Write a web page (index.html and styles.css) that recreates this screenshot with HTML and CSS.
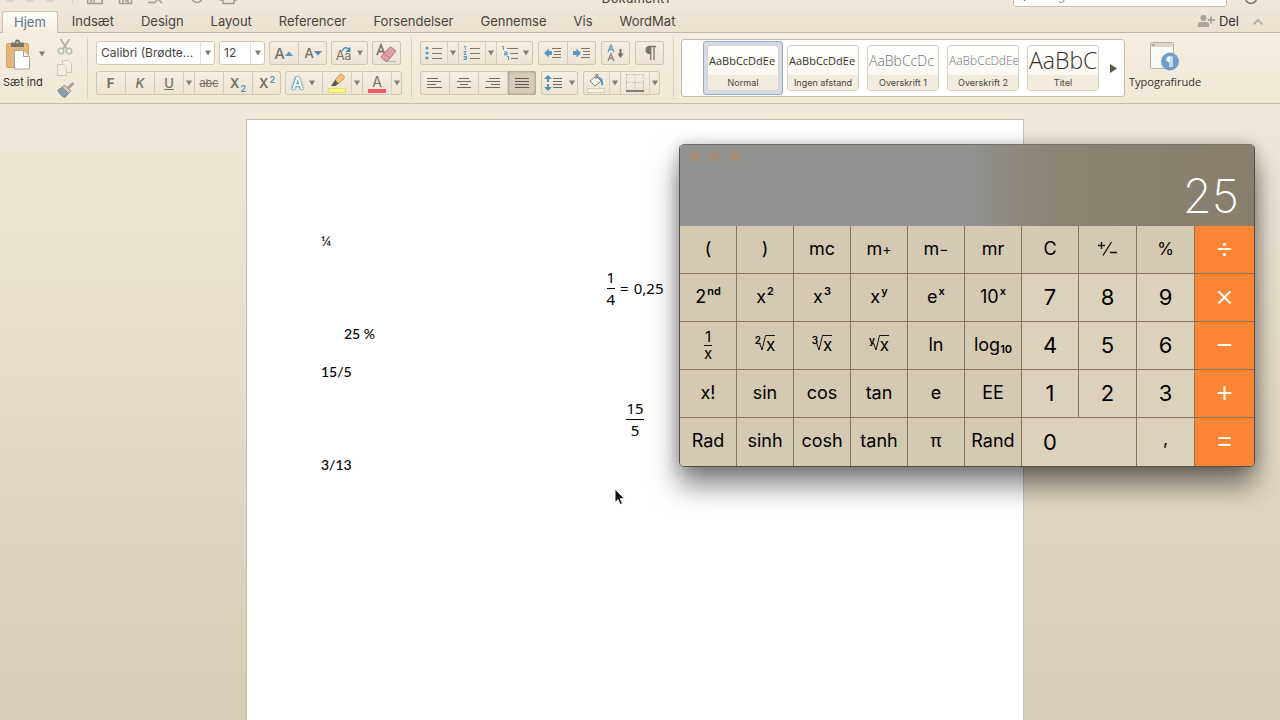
FILE: index.html
```html
<!DOCTYPE html>
<html lang="da">
<head>
<meta charset="utf-8">
<title>Dokument1</title>
<link rel="stylesheet" href="styles.css">
</head>
<body>
<svg class="defs" aria-hidden="true">
  <symbol id="caret" viewBox="0 0 6 6"><path d="M0 .5h6L3 5.500z" fill="#857d70"/></symbol>
</svg>

<header class="titlebar">
  <div class="title-left">
    <span class="light"></span><span class="light"></span><span class="light"></span>
    <span class="title-sep"></span>
    <svg class="qa" width="150" height="16" viewBox="0 0 150 16" fill="none" stroke="#a39c8f" stroke-width="1.500"><path d="M.7 2v12.500h14.600V2M4 14V8h3v6M32.500 2v12.500h12V2M36 14V9h5v5M39 9v4M61 13.500h7l4-5M71 10l4 4M136 9v5.500h11V9M133 6v5h3M147 11h3V6"/><circle cx="110" cy="8.500" r="5"/></svg>
  </div>
  <div class="doc-title">Dokument1</div>
  <div class="title-right">
    <label class="search">
      <svg width="12" height="12" viewBox="0 0 12 12" fill="none" stroke="#4f4a43" stroke-width="1.500"><circle cx="7" cy="5" r="4"/><path d="M4 8l-3 3.500"/></svg>
      <input type="search" aria-label="Søg" placeholder="Søg i dokument">
    </label>
    <svg width="14" height="14" viewBox="0 0 14 14" fill="none" stroke="#7d766a" stroke-width="1.500"><circle cx="7" cy="7" r="5.500"/></svg>
  </div>
</header>

<nav class="tabs">
  <button class="tab active">Hjem</button>
  <button class="tab">Indsæt</button>
  <button class="tab">Design</button>
  <button class="tab">Layout</button>
  <button class="tab">Referencer</button>
  <button class="tab">Forsendelser</button>
  <button class="tab">Gennemse</button>
  <button class="tab">Vis</button>
  <button class="tab">WordMat</button>
  <button class="share">
    <svg width="18" height="14" viewBox="0 0 18 14" fill="#aaa398"><circle cx="5.500" cy="4" r="3"/><path d="M0 13v-2.500Q0 8 3 8h5q3 0 3 2.500V13z"/><path d="M13 2.500v7M9.800 6h7" stroke="#aaa398" stroke-width="1.800"/></svg>
    Del
  </button>
  <button class="collapse" aria-label="Skjul bånd"><svg width="12" height="8" viewBox="0 0 12 8"><path d="M1.500 6.500L6 2l4.500 4.500" fill="none" stroke="#b9b4aa" stroke-width="2"/></svg></button>
</nav>

<section class="ribbon">
  <div class="group clip">
    <div class="paste">
      <button class="paste-btn" aria-label="Sæt ind">
        <svg width="26" height="31" viewBox="0 0 26 31"><rect x=".5" y="4.500" width="22" height="24" rx="1.500" fill="#e5b67d" stroke="#cf9f68"/><path d="M5 8V4.500q0-1 1-1h3Q9 .5 11.500.5T14 3.500h3q1 0 1 1V8z" fill="#77746d"/><circle cx="11.500" cy="3.500" r="1" fill="#d9d3c4"/><path d="M8.500 11.500h9l6 6V30h-15z" fill="#fff" stroke="#aaa496"/><path d="M17.500 11.500v6h6" fill="#eee" stroke="#aaa496"/></svg>
        <svg class="caret" width="6" height="6"><use href="#caret"/></svg>
      </button>
      <span class="paste-label">Sæt ind</span>
    </div>
    <div class="clip-tools">
      <button aria-label="Klip"><svg width="16" height="17" viewBox="0 0 16 17" fill="none" stroke="#b3ada1" stroke-width="1.600"><path d="M3.500 1l6.500 10M12.500 1L6 11"/><circle cx="4" cy="13" r="2.800" stroke="#b4bec3"/><circle cx="12" cy="13" r="2.800" stroke="#b4bec3"/></svg></button>
      <button aria-label="Kopiér"><svg width="16" height="17" viewBox="0 0 16 17" fill="#f5efe0" stroke="#d0c8b8"><path d="M5.500.5h6l3 3v9h-9z"/><path d="M.5 4.500h6l3 3v8h-9z"/></svg></button>
      <button aria-label="Formatpensel"><svg width="18" height="17" viewBox="0 0 18 17"><path d="M15.500 2L11 6" stroke="#a8a196" stroke-width="3" stroke-linecap="round"/><path d="M7.500 3l6.500 6-2.500 2.500L5 5.500z" fill="#d2cabb" stroke="#989184"/><path d="M5 5.500l6.500 6L8 15.500Q3 14 1 8z" fill="#86a0b2" stroke="#8a8880"/></svg></button>
    </div>
  </div>

  <div class="group">
    <div class="row">
      <label class="combo font-name"><select aria-label="Skrifttype"><option>Calibri (Brødte...</option></select><span class="drop"><svg class="caret" width="6" height="6"><use href="#caret"/></svg></span></label>
      <label class="combo font-size"><select aria-label="Skriftstørrelse"><option>12</option></select><span class="drop"><svg class="caret" width="6" height="6"><use href="#caret"/></svg></span></label>
      <div class="set">
        <button class="cell" aria-label="Større skrift"><span class="grow">A</span><svg width="8" height="5" viewBox="0 0 8 5"><path d="M0 5l4-4.500L8 5z" fill="#5b93c0"/></svg></button>
        <button class="cell" aria-label="Mindre skrift"><span class="shrink">A</span><svg width="8" height="5" viewBox="0 0 8 5"><path d="M0 0l4 4.500L8 0z" fill="#5b86ae"/></svg></button>
      </div>
      <div class="set"><button class="cell medium case" aria-label="Store og små bogstaver"><span class="aa">A<small>a</small></span><svg class="case-arrow" width="11" height="6" viewBox="0 0 11 6"><path d="M1 5Q3 0 8 3" fill="none" stroke="#4f90c0" stroke-width="1.500"/><path d="M9.500.5V6H4.500z" fill="#4f90c0"/></svg><svg class="caret" width="6" height="6"><use href="#caret"/></svg></button></div>
      <div class="set"><button class="cell" aria-label="Ryd formatering"><svg width="22" height="20" viewBox="0 0 22 20"><path d="M1 12L5 2l4 10M2.500 8.500h5" fill="none" stroke="#807a6f" stroke-width="1.800"/><path d="M10 18.500h10" stroke="#b9b2a3"/><path d="M5.500 13L13.500 4.500q1-1 2 0l3.500 2.500q1 1 0 2.200L11.500 18q-1 .9-2 0l-4-3q-1-1 0-2z" fill="#e0a0a4" stroke="#b4797e"/><path d="M8 10.500l6 5" stroke="#b4797e"/></svg></button></div>
    </div>
    <div class="row">
      <div class="set">
        <button class="cell"><b>F</b></button>
        <button class="cell"><i>K</i></button>
        <button class="cell"><u>U</u></button><button class="cell arrow" aria-label="Understregningstype"><svg class="caret" width="6" height="6"><use href="#caret"/></svg></button>
        <button class="cell"><s>abc</s></button>
        <button class="cell"><span class="script">X<sub>2</sub></span></button>
        <button class="cell"><span class="script">X<sup>2</sup></span></button>
      </div>
      <div class="set">
        <button class="cell medium effect"><span class="glow">A</span><svg class="caret" width="6" height="6"><use href="#caret"/></svg></button>
        <button class="cell" aria-label="Fremhævningsfarve"><svg width="20" height="20" viewBox="0 0 20 20"><rect x="1.500" y="15.500" width="17" height="4" fill="#f8f87a" stroke="#e3df78"/><path d="M8 7l5-5.500q1-1 2 0l2 2q1 1 0 2L11 11z" fill="#efc07e" stroke="#c79456"/><path d="M8 7l3.500 3.500L8.500 13H4z" fill="#5d5a54"/></svg></button><button class="cell arrow" aria-label="Vælg fremhævning"><svg class="caret" width="6" height="6"><use href="#caret"/></svg></button>
        <button class="cell color" aria-label="Skriftfarve"><span>A</span></button><button class="cell arrow" aria-label="Vælg skriftfarve"><svg class="caret" width="6" height="6"><use href="#caret"/></svg></button>
      </div>
    </div>
  </div>

  <div class="group para">
    <div class="row">
      <div class="set">
        <button class="cell list" aria-label="Punkttegn"><svg width="18" height="14" viewBox="0 0 18 14"><g fill="#5b97c5"><circle cx="2" cy="2" r="1.600"/><circle cx="2" cy="7" r="1.600"/><circle cx="2" cy="12" r="1.600"/></g><path d="M7 2.500h10M7 7.500h10M7 12.500h10" stroke="#7d766b"/></svg></button><button class="cell arrow" aria-label="Vælg punkttegn"><svg class="caret" width="6" height="6"><use href="#caret"/></svg></button>
        <button class="cell list" aria-label="Nummerering"><svg width="18" height="16" viewBox="0 0 18 16"><g fill="none" stroke="#5b97c5"><path d="M1 1.500h1.500V4.500M.5 6.500h2.500L1 9.500h2.500M.5 11.500h3v3h-3M1 13h2"/></g><path d="M7 3.500h10M7 8.500h10M7 13.500h10" stroke="#7d766b"/></svg></button><button class="cell arrow" aria-label="Vælg nummerering"><svg class="caret" width="6" height="6"><use href="#caret"/></svg></button>
        <button class="cell medium multi" aria-label="Liste på flere niveauer"><svg width="18" height="16" viewBox="0 0 18 16"><path d="M1 1.500h1.500V5M3 7h3v3H3.500V8.500H6M6 11.500h1.500v3.500" fill="none" stroke="#5b97c5"/><path d="M6 3.500h11M9 8.500h8M10 13.500h7" stroke="#7d766b"/></svg><svg class="caret" width="6" height="6"><use href="#caret"/></svg></button>
      </div>
      <div class="set">
        <button class="cell" aria-label="Formindsk indrykning"><svg width="18" height="12" viewBox="0 0 18 12"><path d="M0 6l5-4.500V4h3v4H5v2.500z" fill="#5b97c5"/><path d="M8 1.500h9M10 4.500h7M10 7.500h7M8 10.500h9" stroke="#7d766b"/></svg></button>
        <button class="cell" aria-label="Forøg indrykning"><svg width="18" height="12" viewBox="0 0 18 12"><path d="M8 6L3.500 1.500V4H0v4h3.500v2.500z" fill="#5b97c5"/><path d="M8 1.500h9M10 4.500h7M10 7.500h7M8 10.500h9" stroke="#7d766b"/></svg></button>
      </div>
      <div class="set"><button class="cell" aria-label="Sortér"><svg width="18" height="18" viewBox="0 0 18 18" fill="none" stroke-width="1.300"><path d="M1 8l3-7 3 7M2.500 5.500h3" stroke="#6599c0"/><path d="M1 17l3-7 3 7M2.500 14.500h3" stroke="#8d8679"/><path d="M13.500 5v7" stroke="#777065" stroke-width="2"/><path d="M10.500 9.500h6L13.500 14z" fill="#777065"/></svg></button></div>
      <div class="set"><button class="cell" aria-label="Vis alle tegn"><svg width="12" height="16" viewBox="0 0 12 16"><path d="M7 1H5.500a4 4 0 000 8H7z" fill="#7d766b"/><path d="M4 1.500h8M6.700 1v14M10 1v14" stroke="#7d766b" stroke-width="1.300"/></svg></button></div>
    </div>
    <div class="row">
      <div class="set">
        <button class="cell" aria-label="Venstrestil"><svg width="16" height="12" viewBox="0 0 16 12" stroke="#716a60"><path d="M0 1.500h11M0 4.500h14M0 7.500h9M0 10.500h15"/></svg></button>
        <button class="cell" aria-label="Centrér"><svg width="16" height="12" viewBox="0 0 16 12" stroke="#716a60"><path d="M3 1.500h10M1 4.500h14M4 7.500h8M1 10.500h14"/></svg></button>
        <button class="cell" aria-label="Højrestil"><svg width="16" height="12" viewBox="0 0 16 12" stroke="#716a60"><path d="M4 1.500h11M1 4.500h14M6 7.500h9M0 10.500h15"/></svg></button>
        <button class="cell pressed" aria-label="Lige margener"><svg width="16" height="12" viewBox="0 0 16 12" stroke="#615a50"><path d="M1 1.500h14M1 4.500h14M1 7.500h14M1 10.500h14"/></svg></button>
      </div>
      <div class="set"><button class="cell medium" aria-label="Linjeafstand"><svg width="19" height="16" viewBox="0 0 19 16"><path d="M4 0l4 4H5v3H3V4H0zM4 16l4-4H5V9H3v3H0z" fill="#4f90c0"/><path d="M9 3.500h9M9 6.500h9M9 9.500h9M9 12.500h9" stroke="#716a60"/></svg><svg class="caret" width="6" height="6"><use href="#caret"/></svg></button></div>
      <div class="set">
        <button class="cell tight" aria-label="Skygge"><svg width="18" height="20" viewBox="0 0 18 20"><rect x=".5" y="15.500" width="17" height="4" fill="#f5efe0" stroke="#d3cbbb"/><path d="M3 8l6-5 5 5-6 5z" fill="#f7f3ea" stroke="#7f8587"/><path d="M9 6V1.500h2V5" fill="none" stroke="#77736a"/><path d="M11 5q5 0 4 7" fill="none" stroke="#5b97c5" stroke-width="2"/></svg></button><button class="cell arrow" aria-label="Vælg skygge"><svg class="caret" width="6" height="6"><use href="#caret"/></svg></button>
        <button class="cell" aria-label="Kanter"><svg width="18" height="18" viewBox="0 0 18 18"><path d="M.5.500h17M.5 8.500h17M.5.500v16M9 .500v16M17.500.500v16" stroke="#a49d90" stroke-dasharray="1 2"/><path d="M0 17h18" stroke="#625c52" stroke-width="1.500"/></svg></button><button class="cell arrow" aria-label="Vælg kanter"><svg class="caret" width="6" height="6"><use href="#caret"/></svg></button>
      </div>
    </div>
  </div>

  <div class="group styles">
    <div class="gallery">
      <button class="style selected"><span class="card"><span class="sample">AaBbCcDdEe</span><span class="name">Normal</span></span></button>
      <button class="style"><span class="card"><span class="sample">AaBbCcDdEe</span><span class="name">Ingen afstand</span></span></button>
      <button class="style"><span class="card"><span class="sample h1">AaBbCcDc</span><span class="name">Overskrift 1</span></span></button>
      <button class="style"><span class="card"><span class="sample h2">AaBbCcDdEe</span><span class="name">Overskrift 2</span></span></button>
      <button class="style"><span class="card"><span class="sample title">AaBbC</span><span class="name">Titel</span></span></button>
      <button class="more" aria-label="Flere typografier"><svg width="7" height="9" viewBox="0 0 7 9"><path d="M0 0l7 4.500L0 9z" fill="#5d574e"/></svg></button>
    </div>
    <button class="pane">
      <svg width="30" height="31" viewBox="0 0 30 31"><rect x=".5" y="1.500" width="23" height="26" rx="1" fill="#fbf9f4" stroke="#b9b1a3"/><path d="M1 2h22v4H1z" fill="#ded4c3"/><circle cx="3.500" cy="4" r="1" fill="#8b8478"/><circle cx="20" cy="20.500" r="9" fill="#6c9fca"/><path d="M20 15.500h-1a2.500 2.500 0 000 5.500h1z" fill="#fff"/><path d="M18.500 16h4M20 16v10M22 16v10" stroke="#fff" stroke-width="1.200"/></svg>
      <span>Typografirude</span>
    </button>
  </div>
</section>

<main class="workspace">
  <article class="page">
    <p>¼</p>
    <div class="formula"><span class="frac"><span>1</span><span>4</span></span><span class="eq">=</span><span>0,25</span></div>
    <p class="indent">25 %</p>
    <p>15/5</p>
    <div class="formula"><span class="frac"><span>15</span><span>5</span></span></div>
    <p>3/13</p>
  </article>
</main>

<section class="calc" aria-label="Lommeregner">
  <div class="display">
    <div class="dots"><span></span><span></span><span></span></div>
    <output>25</output>
  </div>
  <div class="keys">
    <button>(</button><button>)</button><button>mc</button><button>m<small>+</small></button><button>m<small>−</small></button><button>mr</button><button>C</button>
    <button><svg width="20" height="16" viewBox="0 0 20 16" role="img" aria-label="plus minus" fill="none" stroke="#111" stroke-width="1.300"><path d="M0 4.500h7M3.500 1v7M13.500 1L5 14.500M12 11.500h7"/></svg></button>
    <button class="pct">%</button><button class="op">÷</button>

    <button>2<sup>nd</sup></button><button>x<sup>2</sup></button><button>x<sup>3</sup></button><button>x<sup>y</sup></button><button>e<sup>x</sup></button><button>10<sup>x</sup></button><button class="num">7</button><button class="num">8</button><button class="num">9</button><button class="op">×</button>

    <button><span class="inverse"><span>1</span><span>x</span></span></button>
    <button><span class="root"><span class="index">2</span><svg width="8" height="16" viewBox="0 0 8 16"><path d="M0 9l1.500-1L4 15 7.500.500H8" fill="none" stroke="#111"/></svg><span class="rad">x</span></span></button>
    <button><span class="root"><span class="index">3</span><svg width="8" height="16" viewBox="0 0 8 16"><path d="M0 9l1.500-1L4 15 7.500.500H8" fill="none" stroke="#111"/></svg><span class="rad">x</span></span></button>
    <button><span class="root"><span class="index">y</span><svg width="8" height="16" viewBox="0 0 8 16"><path d="M0 9l1.500-1L4 15 7.500.500H8" fill="none" stroke="#111"/></svg><span class="rad">x</span></span></button>
    <button>ln</button><button>log<sub>10</sub></button><button class="num">4</button><button class="num">5</button><button class="num">6</button><button class="op">−</button>

    <button>x!</button><button>sin</button><button>cos</button><button>tan</button><button>e</button><button>EE</button><button class="num">1</button><button class="num">2</button><button class="num">3</button><button class="op">+</button>

    <button>Rad</button><button>sinh</button><button>cosh</button><button>tanh</button><button>π</button><button>Rand</button><button class="num zero">0</button><button class="num comma">,</button><button class="op">=</button>
  </div>
</section>

<svg class="pointer" width="12" height="18" viewBox="0 0 12 18"><path d="M1 1v13.500l3-2.800 2.200 4.800 2.300-1-2.200-4.700H10.500z" fill="#111" stroke="#fff"/></svg>
</body>
</html>
```
FILE: styles.css
```css
* { box-sizing: border-box; }
html, body { height: 100%; }
body {
  margin: 0;
  display: flex;
  flex-direction: column;
  overflow: hidden;
  position: relative;
  font-family: Inter, "Liberation Sans", sans-serif;
  color: #48433d;
  background: #ebe2cf;
}
button {
  font: inherit;
  color: inherit;
  background: none;
  border: 0;
  padding: 0;
  margin: 0;
}
svg { display: block; flex: none; }
.defs { position: absolute; width: 0; height: 0; }

/* Title bar */
.titlebar {
  height: 11px;
  flex: none;
  display: grid;
  grid-template-columns: 1fr auto 1fr;
  align-items: end;
  overflow: hidden;
  padding: 0 22px 5px 4px;
  background: #efe8d8;
}
.title-left, .title-right { display: flex; align-items: flex-end; height: 6px; }
.title-left { gap: 8px; padding-bottom: 4px; }
.title-right { justify-content: flex-end; gap: 17px; }
.title-right > svg { margin-bottom: 2px; }
.light { width: 12px; height: 12px; border-radius: 6px; background: #d8d0c1; margin-bottom: 1px; }
.title-sep { width: 1px; height: 12px; background: #d5ccba; margin: 0 6px 0 8px; }
.qa { margin-bottom: -2px; }
.doc-title { font-size: 13px; line-height: 16px; height: 7px; display: flex; align-items: flex-end; padding: 0 0 1px 9px; }
.search {
  display: flex;
  align-items: center;
  gap: 6px;
  width: 214px;
  height: 22px;
  border: 1px solid #c8c0b2;
  border-radius: 3px;
  background: #fff;
  padding: 0 9px 2px;
}
.search input {
  flex: 1;
  min-width: 0;
  border: 0;
  padding: 0;
  background: none;
  font: 13px Inter, sans-serif;
}
.search input::placeholder { color: #a39c92; opacity: 1; }

/* Tabs */
.tabs {
  height: 22px;
  flex: none;
  display: flex;
  align-items: stretch;
  gap: 1px;
  padding: 0 16px 0 2px;
  border-bottom: 1px solid #c2b9a6;
  background: linear-gradient(#eee6d6, #eae1d0);
}
.tab { padding: 0 13px 1px; font-size: 13px; line-height: 18px; }
.tab.active {
  padding: 0 11px 2px;
  height: 22px;
  border: 1px solid #c9c0ad;
  border-width: 1px 1px 0;
  border-radius: 3px 3px 0 0;
  background: linear-gradient(#fffefa, #f5eedd);
  color: #5d7392;
}
.share { margin-left: auto; display: flex; align-items: center; gap: 3px; padding-bottom: 2px; font-size: 13px; line-height: 18px; color: #36313a; }
.collapse { margin-left: 12px; }

/* Ribbon */
.ribbon {
  height: 71px;
  flex: none;
  display: flex;
  border-bottom: 1px solid #c7bda9;
  background: linear-gradient(#f5efdf, #f0e8d7);
}
.group {
  display: flex;
  flex-direction: column;
  gap: 6px;
  padding: 8px 10px 0 8px;
  position: relative;
}
.group:not(.styles)::after {
  content: "";
  position: absolute;
  right: 0;
  top: 4px;
  bottom: 4px;
  width: 1px;
  background: #d9d0be;
}
.group.clip { flex-direction: row; gap: 12px; width: 88px; padding: 5px 0 0 3px; }
.paste { width: 42px; white-space: nowrap; }
.paste-btn { display: flex; align-items: center; gap: 7px; padding-left: 3px; height: 32px; }
.paste-label { display: block; font-size: 11px; line-height: 20px; margin-top: 2px; color: #332e28; }
.clip-tools { display: flex; flex-direction: column; gap: 5px; }
.row { display: flex; gap: 4px; height: 24px; }
.para .row { gap: 5px; }
.set {
  display: flex;
  border-radius: 3px;
  box-shadow: inset 0 0 0 1px #cfc6b4;
  background: linear-gradient(#f6f0e2, #ece3d2);
}
.cell {
  width: 29px;
  height: 24px;
  display: flex;
  align-items: center;
  justify-content: center;
  font-size: 14px;
  color: #777065;
}
.cell + .cell { border-left: 1px solid #d3cab8; }
.cell.arrow { width: 11px; border-left-color: #d9d0be; }
.cell.medium { width: 37px; gap: 6px; }
.cell.list { width: 27px; }
.cell.tight { width: 26px; }
.cell.multi { gap: 4px; }
.cell.pressed { background: #d6ccb9; border-radius: 0 3px 3px 0; box-shadow: inset 0 0 3px #7d7466; }
.combo {
  display: flex;
  border: 1px solid #cfc6b4;
  border-radius: 3px;
  background: #fff;
}
.combo select {
  flex: 1;
  min-width: 0;
  appearance: none;
  border: 0;
  background: none;
  padding: 0 4px 1px;
  font: 12px Inter, sans-serif;
  color: #48433d;
}
.font-name { width: 119px; }
.font-size { width: 46px; }
.drop { width: 14px; border-left: 1px solid #e3ddd2; display: flex; align-items: center; justify-content: center; }
.grow { font-size: 15px; font-weight: 500; }
.shrink { font-size: 13px; font-weight: 500; }
.case { position: relative; }
.case-arrow { position: absolute; left: 10px; top: 5px; }
.aa { padding-top: 3px; font-size: 13px; }
.aa small { font-size: 12px; }
.cell b { font-size: 13px; font-weight: 700; }
.cell i, .cell u { font-size: 13px; font-weight: 500; }
.cell s { font-size: 11px; }
.script { font-size: 13px; font-weight: 600; line-height: 16px; }
.script sub, .script sup { font-size: 9px; line-height: 0; color: #5b8fb8; margin-left: 1px; }
.glow { font-size: 16px; font-weight: 600; color: #fff; text-shadow: 0 0 1px #3f87b5, 0 0 1px #3f87b5, 0 0 2px #3f87b5, 0 0 2px #3f87b5; }
.color span { line-height: 14px; padding: 0 4px; border-bottom: 4px solid #f15b66; margin-top: 2px; }

/* Style gallery */
.group.styles { flex-direction: row; gap: 4px; padding: 6px 0 0 7px; }
.gallery {
  display: flex;
  align-items: center;
  height: 58px;
  padding: 0 0 0 21px;
  border: 1px solid #c3bbaa;
  border-radius: 3px;
  background: #fff;
}
.style { width: 80px; height: 54px; padding: 4px; border-radius: 3px; }
.style.selected { background: #d3dbe9; border: 1px solid #9aa8bd; padding: 3px; }
.card {
  display: flex;
  flex-direction: column;
  height: 46px;
  border: 1px solid #d8d2c5;
  border-radius: 3px;
  overflow: hidden;
  background: linear-gradient(#fff, #f8f4e9);
}
.sample {
  height: 29px;
  display: flex;
  align-items: center;
  padding: 0 1px;
  font: 11px/29px "Open Sans", sans-serif;
  color: #38332d;
  white-space: nowrap;
  overflow: hidden;
}
.sample.h1 { font-size: 14px; font-weight: 300; color: #6f7480; }
.sample.h2 { font-size: 12px; font-weight: 300; color: #6f7480; }
.sample.title { font-size: 23px; font-weight: 300; }
.name { flex: 1; background: #f2ecdf; font-size: 9px; line-height: 15px; text-align: center; }
.more { width: 21px; display: flex; justify-content: center; }
.pane { display: flex; flex-direction: column; align-items: center; padding-top: 2px; height: 56px; font: 11px/20px "Open Sans", sans-serif; color: #332e28; }

/* Document */
.workspace {
  flex: 1;
  min-height: 0;
  display: flex;
  justify-content: center;
  padding: 15px 10px 0 0;
  background: linear-gradient(#f0e9d9, #d7ccb5);
}
.page {
  width: 778px;
  max-width: 100%;
  padding: 111px 74px 0;
  border: 1px solid #c9c0ac;
  border-bottom: 0;
  background: #fff;
  color: #000;
  font: 500 14px/19px Lato, sans-serif;
}
.page p { margin: 0; }
.page .indent { padding-left: 23px; margin-bottom: 19px; }
.formula {
  display: flex;
  align-items: center;
  justify-content: center;
  gap: 5px;
  height: 36px;
  margin: 20px 0 18px;
  font: 15px/21px "Noto Sans", sans-serif;
}
.frac { display: inline-flex; flex-direction: column; align-items: center; }
.frac span:first-child { border-bottom: 1px solid #000; }

/* Calculator */
.calc {
  position: absolute;
  top: 144px;
  right: 25px;
  width: 576px;
  border: 1px solid #55504a;
  border-top-color: #77736b;
  border-radius: 5px;
  overflow: hidden;
  box-shadow: 0 18px 28px rgba(0, 0, 0, .5), 0 0 14px rgba(0, 0, 0, .2);
  color: #000;
}
.display {
  display: flex;
  justify-content: space-between;
  height: 81px;
  padding: 6px 15px 0 9px;
  background: linear-gradient(90deg, #929291 50%, #8f8e8a 54%, #8d8779 60%, #8b8473 66%, #877e6c);
}
.dots { display: flex; gap: 9px; height: 10px; }
.dots span { width: 11px; height: 11px; border-radius: 6px; background: radial-gradient(#aa8a70 30%, #9a8f84 75%); }
output { color: #fff; font: 200 47px/89px Inter, sans-serif; }
.keys {
  display: grid;
  grid-template-columns: repeat(7, 56fr) 57fr 57fr 59fr;
  grid-template-rows: repeat(4, 47px) 48px;
  gap: 1px;
  background: #8b745d;
}
.keys button {
  display: flex;
  align-items: center;
  justify-content: center;
  min-width: 0;
  padding-bottom: 2px;
  background: #d4c9b1;
  font-size: 18px;
  line-height: 22px;
}
.keys sup, .keys sub { font-size: 11px; font-weight: 600; line-height: 12px; }
.keys sup { align-self: flex-start; margin: 11px 0 0 1px; }
.keys sub { align-self: flex-end; margin-bottom: 12px; }
.keys small { font-size: 14px; }
.keys .num { background: #dcd2bc; font-size: 22px; padding-bottom: 1px; }
.keys .pct { font-size: 17px; }
.keys .op { background: #f98535; color: #fff; font-size: 30px; font-weight: 300; padding-bottom: 6px; }
.keys .zero { grid-column: span 2; justify-content: flex-start; padding-left: 21px; }
.keys .comma { font-size: 18px; padding-bottom: 7px; }
.inverse { display: flex; flex-direction: column; align-items: center; font-size: 15px; line-height: 17px; }
.inverse span:first-child { border-bottom: 1px solid #111; line-height: 16px; padding: 0 1px; }
.inverse span:last-child { line-height: 15px; }
.root { display: flex; align-items: flex-start; }
.index { font-size: 10px; font-weight: 600; line-height: 10px; margin-right: -3px; }
.rad { border-top: 1px solid #111; font-size: 17px; line-height: 18px; }

.pointer { position: absolute; left: 614px; top: 488px; }
```
